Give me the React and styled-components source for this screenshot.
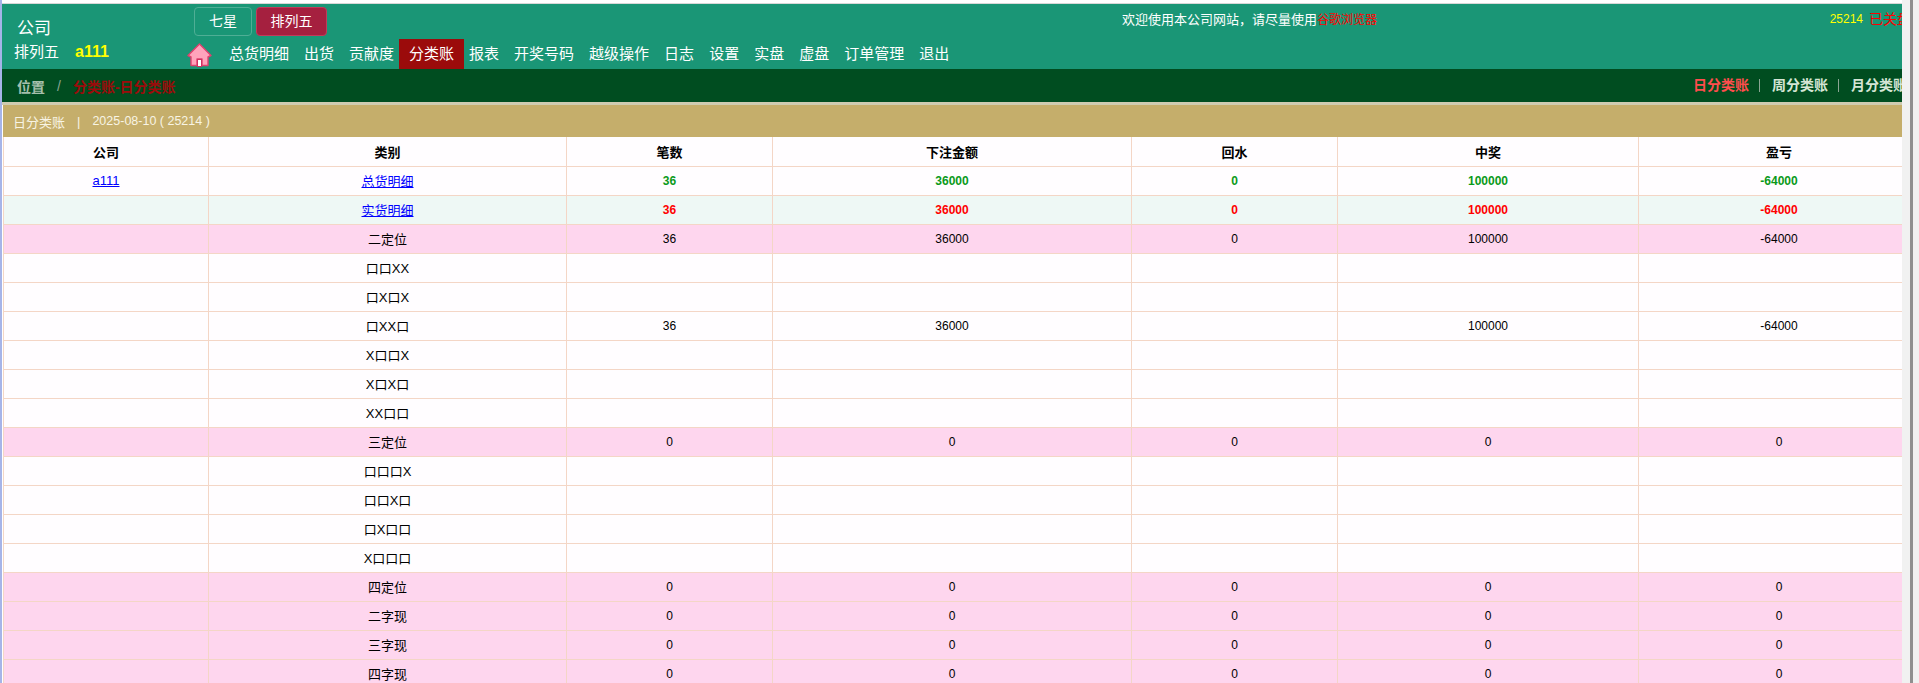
import styled, { createGlobalStyle } from 'styled-components';

const cjk = '"Liberation Sans", "Noto Sans CJK SC", sans-serif';

const GlobalStyle = createGlobalStyle`
  html, body {
    margin: 0;
    height: 100%;
    overflow: hidden;
    background: #fff;
    font-family: ${cjk};
  }
`;

const Shell = styled.div`
  display: flex;
  height: 100vh;
  overflow: hidden;
  border-left: 2px solid #a6b4e8;
`;

const Page = styled.div`
  flex: 1;
  min-width: 0;
  overflow: hidden;
  padding-top: 3px;
`;

const Inner = styled.div`
  width: 1917px;
`;

const Scrollbar = styled.div`
  flex: 0 0 17px;
  display: flex;
  justify-content: center;
  padding-left: 2px;
  box-sizing: border-box;
  background: #f1f1f1;
`;

const ScrollThumb = styled.div`
  width: 3px;
  background: #8f8f8f;
`;

const Header = styled.header`
  display: flex;
  height: 65px;
  border-top: 1px solid #d8d8d8;
  background: #1a9676;
  color: #fff;
`;

const Brand = styled.div`
  flex: 0 0 184px;
  padding: 14px 0 0 12px;
  box-sizing: border-box;
`;

const BrandName = styled.div`
  font-size: 17px;
  line-height: 22px;
  padding-left: 3px;
`;

const BrandLine = styled.div`
  display: flex;
  align-items: center;
  gap: 16px;
  font-size: 15px;
  line-height: 24px;
`;

const UserName = styled.span`
  color: #ff0;
  font-size: 16px;
  font-weight: bold;
`;

const HeaderMain = styled.div`
  flex: 1;
  display: flex;
  flex-direction: column;
`;

const TopRow = styled.div`
  display: flex;
  align-items: flex-start;
  height: 33px;
  padding: 3px 8px 0 8px;
`;

const Tabs = styled.div`
  display: flex;
  gap: 4px;
`;

const Tab = styled.a`
  height: 29px;
  box-sizing: border-box;
  padding: 0 ${p => (p.$active ? 13.5 : 14)}px;
  border: 1px solid ${p => (p.$active ? '#c23a5a' : '#4fae95')};
  border-radius: 4px;
  background: ${p => (p.$active ? '#a5203f' : 'transparent')};
  font-size: 14px;
  line-height: 27px;
  color: #fff;
`;

const Welcome = styled.div`
  margin-left: 795px;
  font-size: 13px;
  line-height: 25px;
`;

const BrowserName = styled.span`
  color: #f00;
  font-size: 12px;
`;

const GameStatus = styled.div`
  display: flex;
  gap: 6px;
  margin-left: auto;
  font-size: 14px;
  line-height: 25px;
`;

const Issue = styled.span`
  color: #ff0;
  font-size: 12px;
`;

const Closed = styled.span`
  color: #f00;
`;

const Nav = styled.nav`
  display: flex;
  align-items: center;
  height: 30px;
`;

const HomeLink = styled.a`
  display: flex;
  width: 32px;
  height: 24px;
  margin-top: 1px;
  padding-left: 1px;
`;

const NavItem = styled.a`
  height: 30px;
  padding: 0 10px;
  font-size: 15px;
  line-height: 30px;
  background: ${p => (p.$active ? '#9b0b0b' : 'transparent')};
  color: #fff;
  & + & {
    margin-left: -5px;
  }
`;

const Breadcrumb = styled.div`
  display: flex;
  align-items: center;
  height: 33px;
  padding-left: 15px;
  background: #004d20;
  font-size: 14px;
  font-weight: bold;
  color: #a5bfac;
`;

const Slash = styled.span`
  margin: 0 12px;
  font-weight: normal;
  color: #8aa593;
`;

const Current = styled.span`
  color: #9b0b0b;
`;

const Periods = styled.div`
  display: flex;
  align-items: center;
  margin-left: auto;
  padding-right: 12px;
`;

const Period = styled.a`
  line-height: 13px;
  color: ${p => (p.$active ? '#ff4d4d' : '#d5e5d5')};
  & + & {
    margin-left: 10px;
    padding-left: 12px;
    border-left: 1px solid #8aa593;
  }
`;

const Divider = styled.div`
  height: 3px;
  background: #cfcbb0;
`;

const Content = styled.div`
  padding-left: 1px;
`;

const TitleBar = styled.div`
  display: flex;
  align-items: center;
  height: 32px;
  padding-left: 10px;
  background: #c5ae6b;
  font-size: 13px;
  color: #f8f4e4;
`;

const TitleSep = styled.span`
  margin: 0 12px;
`;

const TitleDate = styled.span`
  font-size: 12.5px;
`;

const Table = styled.table`
  width: 100%;
  table-layout: fixed;
  border-collapse: collapse;
  font-size: 12px;
`;

const Row = styled.tr`
  height: 29px;
  background: ${p => p.$bg};
  color: ${p => p.$color};
  font-weight: ${p => (p.$bold ? 'bold' : 'normal')};
`;

const HeadCell = styled.th`
  padding: 0;
  font-size: 13px;
  font-weight: bold;
  border: 1px solid #f4d6c6;
  border-top: none;
`;

const Cell = styled.td`
  padding: 0;
  text-align: center;
  border: 1px solid #f4d6c6;
`;

const NameCell = styled(Cell)`
  font-size: 13px;
  font-weight: normal;
  color: #000;
`;

const DetailLink = styled.a`
  color: #00f;
  text-decoration: underline;
`;

const WHITE = '#fffdff';
const PINK = '#fed6ee';
const MINT = '#eef8f5';

const columns = [
  ['公司', 205],
  ['类别', 358],
  ['笔数', 206],
  ['下注金额', 359],
  ['回水', 206],
  ['中奖', 301],
  ['盈亏', 281],
];

const navItems = ['总货明细', '出货', '贡献度', '分类账', '报表', '开奖号码', '越级操作', '日志', '设置', '实盘', '虚盘', '订单管理', '退出'];

const zeros = ['0', '0', '0', '0', '0'];
const blank = ['', '', '', '', ''];
const played = ['36', '36000', '0', '100000', '-64000'];

const rows = [
  { name: '二定位', bg: PINK, cells: played },
  { name: '口口XX', bg: WHITE, cells: blank },
  { name: '口X口X', bg: WHITE, cells: blank },
  { name: '口XX口', bg: WHITE, cells: ['36', '36000', '', '100000', '-64000'] },
  { name: 'X口口X', bg: WHITE, cells: blank },
  { name: 'X口X口', bg: WHITE, cells: blank },
  { name: 'XX口口', bg: WHITE, cells: blank },
  { name: '三定位', bg: PINK, cells: zeros },
  { name: '口口口X', bg: WHITE, cells: blank },
  { name: '口口X口', bg: WHITE, cells: blank },
  { name: '口X口口', bg: WHITE, cells: blank },
  { name: 'X口口口', bg: WHITE, cells: blank },
  { name: '四定位', bg: PINK, cells: zeros },
  { name: '二字现', bg: PINK, cells: zeros },
  { name: '三字现', bg: PINK, cells: zeros },
  { name: '四字现', bg: PINK, cells: zeros },
];

const HomeIcon = () => (
  <svg width="25" height="24" viewBox="0 0 25 24">
    <path d="M12.5 1 L24 12.5 L21 14 L21 22.5 L15 22.5 L15 16 L10 16 L10 22.5 L4 22.5 L4 14 L1 12.5 Z" fill="#ffa3bb" stroke="#e0406f" strokeWidth="1.4" strokeLinejoin="round" />
    <rect x="10.5" y="16.5" width="4" height="7" fill="#fff" stroke="#d03060" strokeWidth="1" />
  </svg>
);

const App = () => (
  <>
    <GlobalStyle />
    <Shell>
      <Page>
        <Inner>
          <Header>
            <Brand>
              <BrandName>公司</BrandName>
              <BrandLine>
                排列五
                <UserName>a111</UserName>
              </BrandLine>
            </Brand>
            <HeaderMain>
              <TopRow>
                <Tabs>
                  <Tab>七星</Tab>
                  <Tab $active>排列五</Tab>
                </Tabs>
                <Welcome>
                  欢迎使用本公司网站，请尽量使用<BrowserName>谷歌浏览器</BrowserName>
                </Welcome>
                <GameStatus>
                  <Issue>25214</Issue>
                  <Closed>已关盘</Closed>
                </GameStatus>
              </TopRow>
              <Nav>
                <HomeLink>
                  <HomeIcon />
                </HomeLink>
                {navItems.map(item => (
                  <NavItem key={item} $active={item === '分类账'}>
                    {item}
                  </NavItem>
                ))}
              </Nav>
            </HeaderMain>
          </Header>
          <Breadcrumb>
            位置
            <Slash>/</Slash>
            <Current>分类账-日分类账</Current>
            <Periods>
              <Period $active>日分类账</Period>
              <Period>周分类账</Period>
              <Period>月分类账</Period>
            </Periods>
          </Breadcrumb>
          <Divider />
          <Content>
            <TitleBar>
              日分类账
              <TitleSep>|</TitleSep>
              <TitleDate>2025-08-10 ( 25214 )</TitleDate>
            </TitleBar>
            <Table>
              <colgroup>
                {columns.map(([title, width]) => (
                  <col key={title} width={width} />
                ))}
              </colgroup>
              <thead>
                <Row $bg={WHITE} $color="#000">
                  {columns.map(([title]) => (
                    <HeadCell key={title}>{title}</HeadCell>
                  ))}
                </Row>
              </thead>
              <tbody>
                <Row $bg={WHITE} $color="#0a9a1a" $bold>
                  <NameCell>
                    <DetailLink>a111</DetailLink>
                  </NameCell>
                  <NameCell>
                    <DetailLink>总货明细</DetailLink>
                  </NameCell>
                  {played.map((value, i) => (
                    <Cell key={i}>{value}</Cell>
                  ))}
                </Row>
                <Row $bg={MINT} $color="#f00" $bold>
                  <NameCell />
                  <NameCell>
                    <DetailLink>实货明细</DetailLink>
                  </NameCell>
                  {played.map((value, i) => (
                    <Cell key={i}>{value}</Cell>
                  ))}
                </Row>
                {rows.map(row => (
                  <Row key={row.name} $bg={row.bg} $color="#000">
                    <NameCell />
                    <NameCell>{row.name}</NameCell>
                    {row.cells.map((value, i) => (
                      <Cell key={i}>{value}</Cell>
                    ))}
                  </Row>
                ))}
              </tbody>
            </Table>
          </Content>
        </Inner>
      </Page>
      <Scrollbar>
        <ScrollThumb />
      </Scrollbar>
    </Shell>
  </>
);

export default App;
